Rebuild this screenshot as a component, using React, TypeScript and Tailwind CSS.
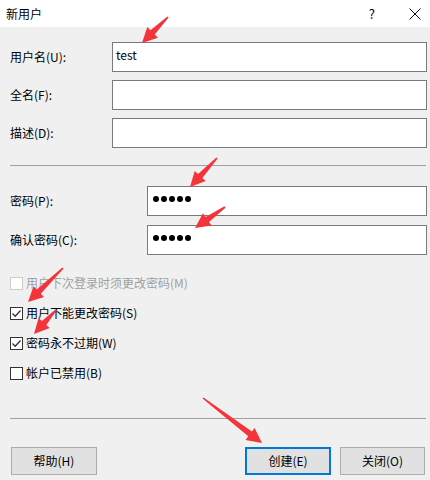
import React from 'react';

const font = { fontFamily: '"Microsoft YaHei", "Noto Sans CJK SC", "Noto Sans", sans-serif' };

// red annotation arrow: tail -> tip
function arrowPoints(x1: number, y1: number, x2: number, y2: number) {
  const dx = x2 - x1;
  const dy = y2 - y1;
  const len = Math.hypot(dx, dy);
  const ux = dx / len;
  const uy = dy / len;
  const nx = -uy;
  const ny = ux;
  const head = 15;
  const bx = x2 - ux * head;
  const by = y2 - uy * head;
  const pts = [
    [x1 + nx * 0.8, y1 + ny * 0.8],
    [bx + nx * 3, by + ny * 3],
    [bx + nx * 7.5, by + ny * 7.5],
    [x2, y2],
    [bx - nx * 7.5, by - ny * 7.5],
    [bx - nx * 3, by - ny * 3],
    [x1 - nx * 0.8, y1 - ny * 0.8],
  ];
  return pts.map((p) => p.map((v) => v.toFixed(1)).join(',')).join(' ');
}

const arrows = [
  [168, 17, 142, 43],
  [217, 158, 190, 187],
  [225, 207, 195, 228],
  [63, 268, 28, 302],
  [56, 310, 34, 334],
  [203, 398, 262, 443],
];

function Field({ label, inputLeft, children }: { label: string; inputLeft: number; children?: React.ReactNode }) {
  return (
    <div className="flex h-[30px] items-center">
      <div className="text-[12px] text-black" style={{ width: inputLeft - 10 }}>{label}</div>
      <div className="h-[30px] flex-1 border border-[#7a7a7a] bg-white">{children}</div>
    </div>
  );
}

function Dots() {
  return (
    <div className="flex h-full items-center gap-[2px] pb-[4px] pl-[5px]">
      {[0, 1, 2, 3, 4].map((i) => (
        <span key={i} className="block h-[6px] w-[6px] rounded-full bg-black" />
      ))}
    </div>
  );
}

function Check({ label, checked, disabled }: { label: string; checked?: boolean; disabled?: boolean }) {
  return (
    <div className="flex h-[30px] items-center">
      <div className={`flex h-[13px] w-[13px] items-center justify-center border bg-white ${disabled ? 'border-[#cccccc]' : 'border-[#333333]'}`}>
        {checked && (
          <svg width="11" height="11" viewBox="0 0 11 11">
            <path d="M1.5 5.5 L4.2 8.2 L9.5 2.5" fill="none" stroke="#333" strokeWidth="1.3" />
          </svg>
        )}
      </div>
      <span className={`ml-[3px] text-[12px] ${disabled ? 'text-[#a0a0a0]' : 'text-black'}`}>{label}</span>
    </div>
  );
}

export default function App() {
  return (
    <div className="relative h-[480px] w-[430px] overflow-hidden bg-[#f0f0f0]" style={font}>
      {/* Title bar */}
      <div className="flex h-[27px] items-center bg-white">
        <span className="ml-[6px] text-[12px] text-black">新用户</span>
        <span className="ml-auto text-[13px] text-black">?</span>
        <svg className="ml-[34px] mr-[9px]" width="12" height="12" viewBox="0 0 12 12">
          <path d="M0.5 0.5 L11.5 11.5 M11.5 0.5 L0.5 11.5" stroke="#111" strokeWidth="1" />
        </svg>
      </div>

      {/* Body */}
      <div className="flex flex-col pl-[10px] pr-[3px] pt-[15px]">
        <div className="flex flex-col gap-[8px]">
          <Field label="用户名(U):" inputLeft={112}>
            <div className="pl-[3px] pt-[3px] text-[12px] text-black">test</div>
          </Field>
          <Field label="全名(F):" inputLeft={112} />
          <Field label="描述(D):" inputLeft={112} />
        </div>

        <div className="mr-[1px] mt-[17px] h-px bg-[#a0a0a0]" />

        <div className="mt-[20px] flex flex-col gap-[9px]">
          <Field label="密码(P):" inputLeft={147}>
            <Dots />
          </Field>
          <Field label="确认密码(C):" inputLeft={147}>
            <Dots />
          </Field>
        </div>

        <div className="mt-[13px] flex flex-col">
          <Check label="用户下次登录时须更改密码(M)" disabled />
          <Check label="用户不能更改密码(S)" checked />
          <Check label="密码永不过期(W)" checked />
          <Check label="帐户已禁用(B)" />
        </div>

        <div className="mr-[1px] mt-[30px] h-px bg-[#a0a0a0]" />

        <div className="mt-[28px] flex items-center">
          <button className="ml-[1px] h-[28px] w-[86px] border border-[#adadad] bg-[#e1e1e1] text-[12px] text-black">帮助(H)</button>
          <button className="ml-auto h-[28px] w-[86px] border-2 border-[#0078d7] bg-[#e1e1e1] text-[12px] text-black">创建(E)</button>
          <button className="ml-[9px] mr-[2px] h-[28px] w-[85px] border border-[#adadad] bg-[#e1e1e1] text-[12px] text-black">关闭(O)</button>
        </div>
      </div>

      {/* annotation arrows */}
      <svg className="pointer-events-none absolute left-0 top-0" width="430" height="480">
        {arrows.map(([a, b, c, d], i) => (
          <polygon key={i} points={arrowPoints(a, b, c, d)} fill="#f5333a" />
        ))}
      </svg>
    </div>
  );
}
